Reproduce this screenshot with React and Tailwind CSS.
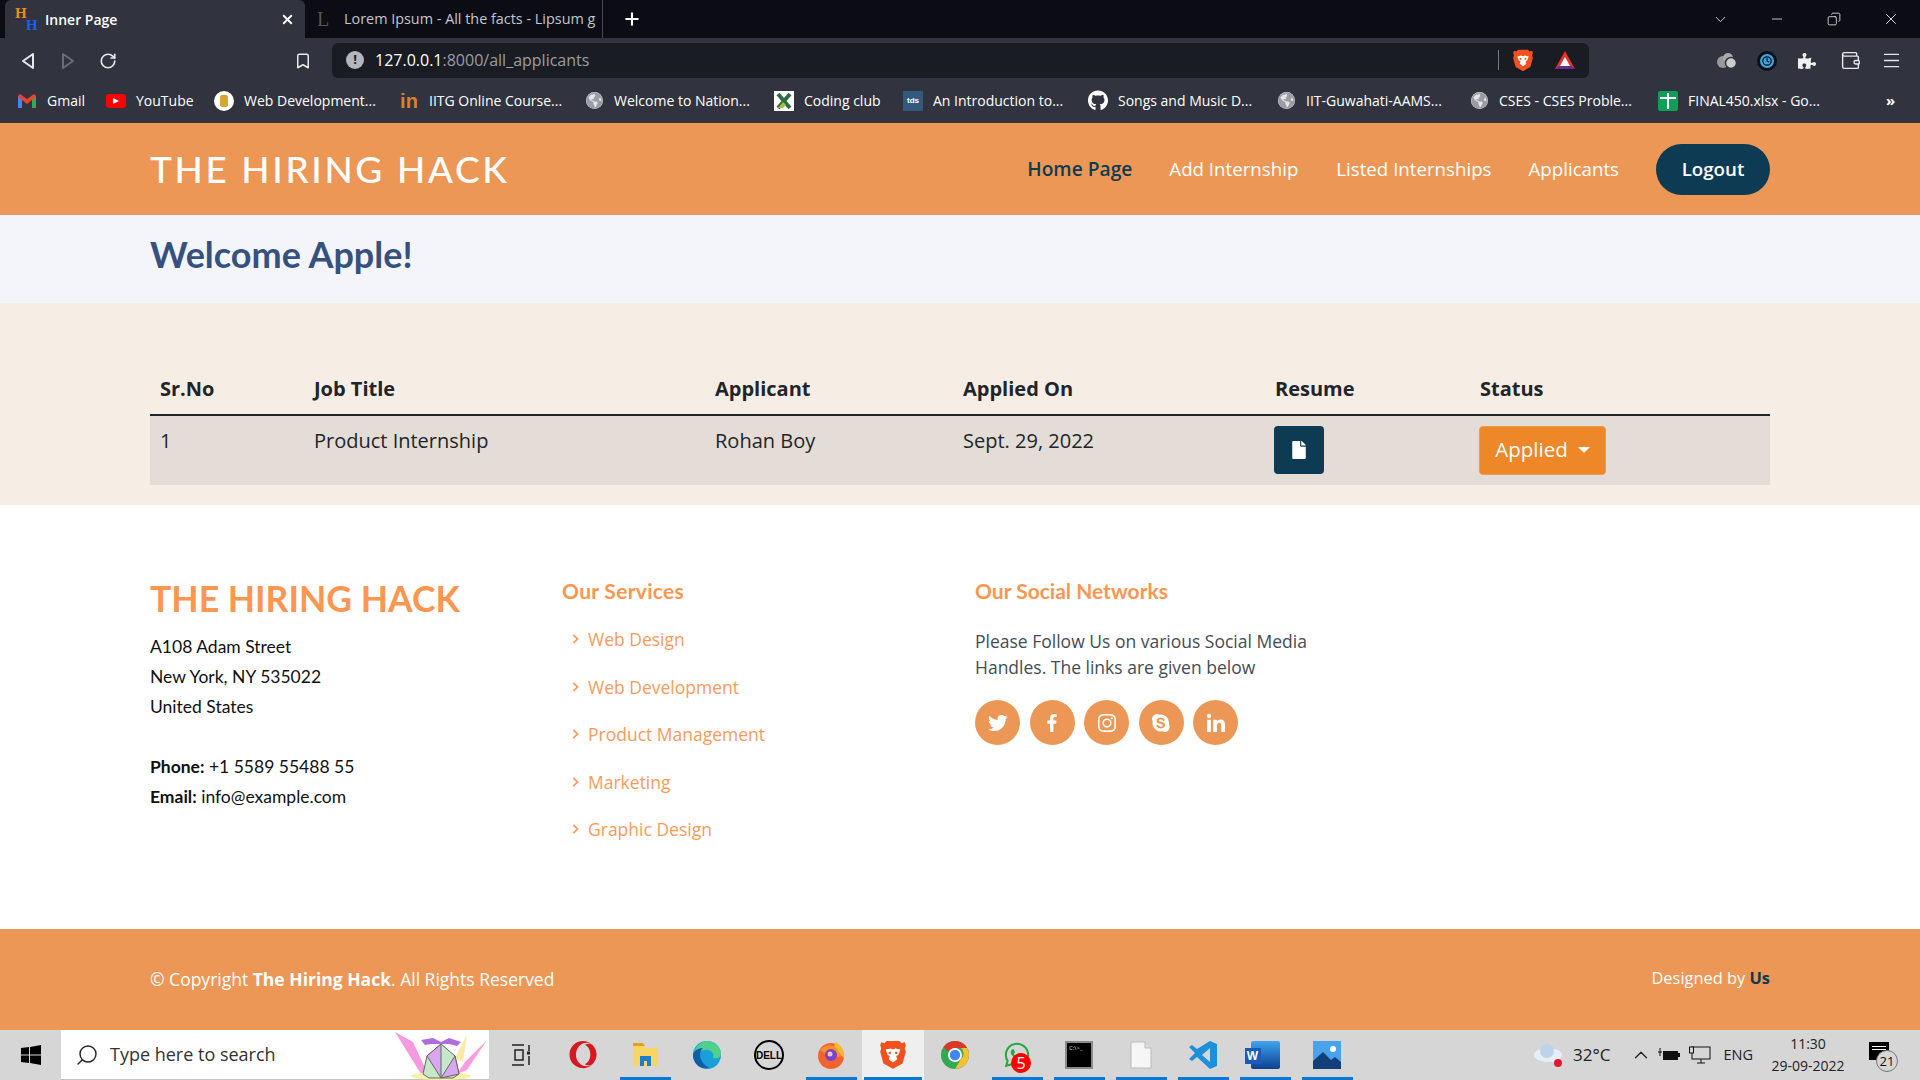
import React from 'react';
import { BiChevronRight, BiLogoTwitter, BiLogoFacebook, BiLogoInstagram, BiLogoSkype, BiLogoLinkedin } from 'react-icons/bi';
import { FaFile, FaGithub, FaPuzzlePiece, FaOpera, FaWhatsapp, FaGlobeAmericas } from 'react-icons/fa';
import { ChevronDown, Minus, Copy, X, Plus, Bookmark, RotateCw, Menu, Search, Wallet, ChevronUp, Clock } from 'lucide-react';

const heading = "font-['Lato',sans-serif]";

const Globe = () => <FaGlobeAmericas className="text-[17px] text-[#9a9da6] bg-[#e4e5e8] rounded-full" />;

const BraveLion = ({ size = 22 }) => (
  <svg width={size} height={size * 1.15} viewBox="0 0 24 28">
    <path d="M6 1h12l2 2 3-1 1 3-1 3 1 3-3 11-9 5-9-5L0 11l1-3-1-3 1-3 3 1z" fill="#f1501f" />
    <path d="M5 9l5-1 2 1 2-1 5 1-2 5-2 1 1 3-4 3-4-3 1-3-2-1z" fill="#fff" />
    <path d="M8 11h2v2H8zM14 11h2v2h-2z" fill="#f1501f" />
  </svg>
);

const bookmarks = [
  { w: 'w-[89px]', label: 'Gmail', icon: <svg width="18" height="14" viewBox="0 0 18 14"><path d="M0 2v12h4V6l5 4 5-4v8h4V2l-2-2-7 5-7-5z" fill="#ea4335" /><path d="M0 3v11h4V6z" fill="#4285f4" /><path d="M18 3v11h-4V6z" fill="#34a853" /></svg> },
  { w: 'w-[108px]', label: 'YouTube', icon: <span className="w-5 h-[14px] bg-[#f00] rounded-[3px] flex items-center justify-center"><span className="w-0 h-0 border-y-[3.5px] border-y-transparent border-l-[6px] border-l-white" /></span> },
  { w: 'w-[185px]', label: 'Web Development...', icon: <span className="w-5 h-5 bg-white rounded-full flex items-center justify-center"><span className="w-2 h-3 bg-[#d7a531] rounded-[2px]" /></span> },
  { w: 'w-[185px]', label: 'IITG Online Course...', icon: <span className="text-[#d9822b] text-[20px] font-bold leading-none font-['Liberation_Sans',sans-serif]">in</span> },
  { w: 'w-[190px]', label: 'Welcome to Nation...', icon: <Globe /> },
  { w: 'w-[129px]', label: 'Coding club', icon: <svg width="20" height="20" viewBox="0 0 20 20"><rect width="20" height="20" fill="#fff" /><path d="M4 3l12 14M16 3L4 17" stroke="#2f6b45" strokeWidth="4" /><path d="M4 17l5-6 3 3-3 3z" fill="#a6c23c" /></svg> },
  { w: 'w-[185px]', label: 'An Introduction to...', icon: <span className="w-5 h-5 bg-[#35597a] text-white text-[8px] font-bold flex items-center justify-center font-['Liberation_Sans',sans-serif]">tds</span> },
  { w: 'w-[188px]', label: 'Songs and Music D...', icon: <FaGithub className="text-[21px] text-white" /> },
  { w: 'w-[193px]', label: 'IIT-Guwahati-AAMS...', icon: <Globe /> },
  { w: 'w-[189px]', label: 'CSES - CSES Proble...', icon: <Globe /> },
  { w: 'w-[213px]', label: 'FINAL450.xlsx - Go...', icon: <span className="w-5 h-5 bg-[#0f9d58] rounded-[2px] relative flex items-center justify-center"><span className="w-[2px] h-4 bg-white" /><span className="absolute w-4 h-[2px] bg-white top-[6px] left-[2px]" /></span> },
];

const TaskIcon = ({ children, active, on }) => (
  <div className={`w-[62px] h-[50px] flex flex-col items-center relative ${on ? 'bg-[#efefef]' : ''}`}>
    <div className="flex-1 flex items-center justify-center">{children}</div>
    {active && <div className={`absolute bottom-0 h-[3px] bg-[#0a78d4] ${on ? 'w-[58px]' : 'w-[51px]'}`} />}
  </div>
);

const socials = [BiLogoTwitter, BiLogoFacebook, BiLogoInstagram, BiLogoSkype, BiLogoLinkedin];
const layanan = ['Web Design', 'Web Development', 'Product Management', 'Marketing', 'Graphic Design'];

const App = () => {
  return (
    <div className="w-[1920px] h-[1080px] overflow-hidden flex flex-col bg-white font-['Open_Sans',sans-serif]">
      {/* --- browser tabs --- */}
      <div className="h-[38px] bg-[#0b0c14] flex items-end text-white shrink-0">
        <div className="ml-[5px] w-[300px] h-[38px] bg-[#31343f] rounded-t-[6px] flex items-center pl-[10px] pr-[10px]">
          <span className="w-[22px] h-[24px] flex font-['Liberation_Serif',serif] font-bold text-[15px] leading-[12px]">
            <span className="self-start w-[11px] h-[12px] text-[#f08a1c]">H</span>
            <span className="self-end w-[11px] h-[12px] text-[#1a5cff]">H</span>
          </span>
          <span className="ml-[8px] text-[14px] font-semibold flex-1">Inner Page</span>
          <X size={15} strokeWidth={3} />
        </div>
        <div className="w-[298px] h-[38px] flex items-center pl-[12px] border-r border-[#444750] my-auto">
          <span className="text-[#555] font-['Liberation_Serif',serif] text-[20px] leading-none w-[27px]">L</span>
          <span className="text-[14.4px] text-[#c4c6cc] whitespace-nowrap overflow-hidden w-[256px]">Lorem Ipsum - All the facts - Lipsum g</span>
        </div>
        <div className="h-[38px] flex items-center ml-[19px]"><Plus size={20} strokeWidth={2.5} /></div>
        <div className="flex-1" />
        <div className="h-[38px] flex items-center text-[#ececec]">
          <ChevronDown size={17} strokeWidth={1.2} className="mr-[40px]" />
          <Minus size={16} strokeWidth={1.2} className="mr-[42px]" />
          <Copy size={14} strokeWidth={1.4} className="mr-[41px] -scale-x-100" />
          <X size={18} strokeWidth={1.2} className="mr-[20px]" />
        </div>
      </div>

      {/* --- toolbar --- */}
      <div className="h-[46px] bg-[#31343f] flex items-center text-[#e8e8ea] shrink-0 pb-[1px]">
        <svg width="14" height="18" viewBox="0 0 14 18" className="ml-[21px]"><path d="M12 2L2 9l10 7z" fill="none" stroke="#e8e8ea" strokeWidth="2" strokeLinejoin="round" /></svg>
        <svg width="14" height="18" viewBox="0 0 14 18" className="ml-[26px]"><path d="M2 2l10 7-10 7z" fill="none" stroke="#6a6d76" strokeWidth="2" strokeLinejoin="round" /></svg>
        <RotateCw size={18} strokeWidth={2.2} className="ml-[24px]" />
        <Bookmark size={18} strokeWidth={2} className="ml-[177px]" />
        <div className="ml-[20px] w-[1257px] h-[35px] mt-[-1px] bg-[#1a1c23] rounded-[6px] flex items-center pl-[14px] pr-[12px]">
          <span className="w-[18px] h-[18px] rounded-full bg-[#b4b6bb] text-[#1a1c23] text-[13px] font-bold flex items-center justify-center">!</span>
          <span className="ml-[11px] text-[16px] text-white">127.0.0.1<span className="text-[#9b9da3]">:8000/all_applicants</span></span>
          <div className="flex-1" />
          <div className="w-[1px] h-5 bg-[#777]" />
          <span className="ml-[14px]"><BraveLion size={20} /></span>
          <svg width="24" height="22" viewBox="0 0 24 22" className="ml-[20px]"><path d="M12 2l10 18H2z" fill="#e5322d" /><path d="M12 8l5 9H7z" fill="#fff" /><path d="M2 20h20l-4-3H6z" fill="#662d91" /></svg>
        </div>
        <svg width="22" height="18" viewBox="0 0 22 18" className="ml-[127px]"><circle cx="7" cy="10" r="6" fill="#999" /><circle cx="12" cy="6" r="5" fill="#aaa" /><circle cx="15" cy="11" r="5.5" fill="#ccc" stroke="#31343f" strokeWidth="1.5" /></svg>
        <span className="ml-[19px] w-5 h-5 rounded-full bg-[#3aa6e0] border-[3px] border-[#0c0f1a] flex items-center justify-center"><Clock size={10} className="text-[#0c0f1a]" strokeWidth={3} /></span>
        <FaPuzzlePiece className="ml-[21px] text-[18px] text-[#f0f0f0]" />
        <Wallet size={21} strokeWidth={1.6} className="ml-[24px]" />
        <Menu size={21} strokeWidth={1.6} className="ml-[20px]" />
      </div>

      {/* --- bookmarks --- */}
      <div className="h-[39px] bg-[#31343f] flex items-center text-white text-[14px] pl-[17px] pb-[6px] shrink-0">
        {bookmarks.map((b) => (
          <div key={b.label} className={`${b.w} flex items-center shrink-0`}>
            <span className="w-[20px] flex items-center justify-center">{b.icon}</span>
            <span className="ml-[10px] whitespace-nowrap">{b.label}</span>
          </div>
        ))}
        <span className="ml-[15px] text-[15px] font-bold">»</span>
      </div>
      <div className="h-[1px] bg-[#ec9755] shrink-0" />

      {/* --- navbar situs --- */}
      <nav className="h-[91px] bg-[#ec9755] flex items-center justify-between px-[150px] shrink-0">
        <span className={`text-white text-[37px] font-medium tracking-[2.6px] leading-none mt-[-2px] ${heading}`}>THE HIRING HACK</span>
        <div className="flex items-center text-[18.7px] text-white">
          <a className="font-semibold text-[#0d3b54] text-[19.2px]">Home Page</a>
          <a className="ml-[37px]">Add Internship</a>
          <a className="ml-[38px]">Listed Internships</a>
          <a className="ml-[37px]">Applicants</a>
          <button className="ml-[37px] w-[114px] h-[51px] rounded-full bg-[#0d3b54] text-white font-semibold">Logout</button>
        </div>
      </nav>

      {/* --- judul --- */}
      <div className="h-[88px] bg-[#f3f5fa] flex items-center px-[150px] shrink-0">
        <h1 className={`text-[36px] font-bold text-[#37517e] ${heading} mt-[-10px]`}>Welcome Apple!</h1>
      </div>

      {/* --- tabel pelamar --- */}
      <section className="h-[202px] bg-[#f6ede5] px-[150px] pt-[50px] text-[#212529] shrink-0">
        <table className="w-full table-fixed text-left text-[20px]">
          <colgroup>
            <col className="w-[154px]" />
            <col className="w-[401px]" />
            <col className="w-[248px]" />
            <col className="w-[312px]" />
            <col className="w-[205px]" />
            <col />
          </colgroup>
          <thead>
            <tr className="h-[62px] border-b-2 border-[#212529]">
              {['Sr.No', 'Job Title', 'Applicant', 'Applied On', 'Resume', 'Status'].map((h) => (
                <th key={h} className="px-[10px] pt-[11px] font-bold text-[20px]">{h}</th>
              ))}
            </tr>
          </thead>
          <tbody>
            <tr className="h-[70px] bg-[#e4dcd6] align-top">
              <td className="px-[10px] pt-[10px]">1</td>
              <td className="px-[10px] pt-[10px]">Product Internship</td>
              <td className="px-[10px] pt-[10px]">Rohan Boy</td>
              <td className="px-[10px] pt-[10px]">Sept. 29, 2022</td>
              <td className="px-[10px] pt-[10px]">
                <button className="-ml-[1px] w-[50px] h-[48px] bg-[#0d3b54] rounded-[4px] flex items-center justify-center text-white"><FaFile className="text-[18px]" /></button>
              </td>
              <td className="px-[10px] pt-[10px]">
                <button className="-ml-[1px] w-[127px] h-[49px] bg-[#ed8728] rounded-[4px] flex items-center justify-center text-white border border-[#f09a4a] text-[20.5px] pb-[2px]">
                  Applied
                  <span className="ml-[10px] w-0 h-0 border-x-[6px] border-x-transparent border-t-[6px] border-t-white" />
                </button>
              </td>
            </tr>
          </tbody>
        </table>
      </section>

      {/* --- footer --- */}
      <footer className="h-[424px] bg-white px-[150px] grid grid-cols-[412px_413px_1fr] shrink-0 text-[#444]">
        <div className={`pt-[72px] ${heading} text-[#111] text-[17.5px] leading-[30px]`}>
          <h3 className="text-[35.5px] font-bold text-[#fd9650] leading-[43px] mb-[12px]">THE HIRING HACK</h3>
          <p>A108 Adam Street</p>
          <p>New York, NY 535022</p>
          <p>United States</p>
          <p className="mt-[30px]"><strong>Phone:</strong> +1 5589 55488 55</p>
          <p><strong>Email:</strong> info@example.com</p>
        </div>
        <div className="pt-[69px]">
          <h4 className={`text-[21px] tracking-[0.3px] font-bold text-[#fd9650] leading-[34px] ${heading}`}>Our Services</h4>
          <ul className="mt-[8px] text-[17.5px] text-[#fb9a5c]">
            {layanan.map((item) => (
              <li key={item} className="h-[47.5px] flex items-center pl-[3px] pb-[1px]">
                <BiChevronRight className="text-[20px] mr-[3px]" />
                {item}
              </li>
            ))}
          </ul>
        </div>
        <div className="pt-[69px]">
          <h4 className={`text-[21px] font-bold text-[#fd9650] leading-[34px] ${heading}`}>Our Social Networks</h4>
          <p className="mt-[20px] text-[17.5px] leading-[26px] text-[#444c55] w-[360px]">Please Follow Us on various Social Media Handles. The links are given below</p>
          <div className="mt-[20px] flex gap-[9.5px]">
            {socials.map((Icon, i) => (
              <a key={i} className="w-[45px] h-[45px] rounded-full bg-[#ec9755] flex items-center justify-center text-white text-[24px]"><Icon /></a>
            ))}
          </div>
        </div>
      </footer>

      {/* --- copyright --- */}
      <div className="h-[101px] bg-[#ec9755] flex items-center justify-between px-[150px] text-white shrink-0">
        <span className="text-[17.5px]">© Copyright <strong>The Hiring Hack</strong>. All Rights Reserved</span>
        <span className="text-[16.4px] mb-[3px]">Designed by <strong className="text-[#0d3b54]">Us</strong></span>
      </div>

      {/* --- taskbar windows --- */}
      <div className="h-[50px] bg-[#d6d6d6] flex items-center shrink-0">
        <div className="w-[61px] flex items-center justify-center">
          <svg width="20" height="20" viewBox="0 0 20 20" fill="#000"><path d="M0 3l8-1v7.5H0zM9 2l11-2v9.5H9zM0 10.5h8V18l-8-1zM9 10.5h11V20L9 18z" /></svg>
        </div>
        <div className="w-[428px] h-[50px] bg-white border-b border-[#c4c4c4] flex items-center pl-[14px] relative mr-[1px]">
          <Search size={24} strokeWidth={1.4} className="-scale-x-100 text-[#222]" />
          <span className="ml-[11px] text-[18px] text-[#333]">Type here to search</span>
          <svg width="94" height="50" viewBox="0 0 94 50" className="absolute right-0 top-0">
            <path d="M0 2l18 10 14 30-6 2z" fill="#f59ae0" />
            <path d="M92 10L70 32l-8 12 10-4z" fill="#fb9ce0" />
            <path d="M72 4L60 28l8 4z" fill="#fbe9a8" />
            <ellipse cx="46" cy="46" rx="30" ry="4" fill="#fbf0a8" />
            <path d="M46 14l14 12 4 18-6 4H34l-6-4 4-18z" fill="#c6e7c9" stroke="#666" />
            <path d="M46 14L32 26l14 22zM60 26l-14 22 18-4z" fill="#d9a7f0" stroke="#666" />
            <path d="M26 10l12-2 8 4 8-4 12 4-4 4-8-2H36l-6 1z" fill="#b06de0" />
          </svg>
        </div>
        <TaskIcon>
          <svg width="20" height="24" viewBox="0 0 20 24" fill="none" stroke="#222" strokeWidth="1.5"><path d="M1 2h12M1 22h12M4 7h8v10H4zM18 2v6M18 13v9" /><path d="M16 10h3" strokeWidth="3" /></svg>
        </TaskIcon>
        <TaskIcon><FaOpera className="text-[28px] text-[#d6181f]" /></TaskIcon>
        <TaskIcon active>
          <svg width="27" height="26" viewBox="0 0 27 26"><path d="M1 3h10l2 3h13v18H1z" fill="#f9d563" /><path d="M1 1h10l2 3H1z" fill="#d9a521" /><path d="M8 14h11v10h-4v-5h-3v5H8z" fill="#1a7fd1" /></svg>
        </TaskIcon>
        <TaskIcon>
          <svg width="30" height="30" viewBox="0 0 30 30"><circle cx="15" cy="15" r="14" fill="#1aa0d8" /><path d="M1 15C3 6 10 1 15 1c8 0 14 6 14 13 0 4-5 5-8 4 2-5-3-9-8-8-6 1-9 3-12 5z" fill="#4fd08c" /><path d="M1 15c0-4 5-7 10-7-5 4-4 14 6 20-9 2-16-5-16-13z" fill="#0f5fa8" /></svg>
        </TaskIcon>
        <TaskIcon>
          <span className="w-[30px] h-[30px] rounded-full border-2 border-black flex items-center justify-center text-[10px] font-bold text-black font-['Liberation_Sans',sans-serif]">DELL</span>
        </TaskIcon>
        <TaskIcon active>
          <svg width="30" height="30" viewBox="0 0 30 30"><circle cx="15" cy="16" r="13" fill="#f2642e" /><path d="M20 2c6 4 9 10 8 16L17 8z" fill="#fbb92f" /><path d="M4 10c5-6 12-6 16-2l6 8-10 2z" fill="#f89028" /><circle cx="15" cy="15" r="6" fill="#7c3fd1" /><circle cx="14" cy="14" r="2.5" fill="#f6c0a8" /></svg>
        </TaskIcon>
        <TaskIcon active on><BraveLion size={26} /></TaskIcon>
        <TaskIcon>
          <svg width="30" height="30" viewBox="0 0 30 30"><circle cx="15" cy="15" r="14" fill="#34a853" /><path d="M15 1a14 14 0 0 1 12.1 7H15a7 7 0 0 0-6.4 4L3.5 7A14 14 0 0 1 15 1z" fill="#e0352b" /><path d="M27.1 8A14 14 0 0 1 15 29l6-10a7 7 0 0 0 0-11z" fill="#fbc02d" /><circle cx="15" cy="15" r="7" fill="#fff" /><circle cx="15" cy="15" r="5.2" fill="#4285f4" /></svg>
        </TaskIcon>
        <TaskIcon active>
          <span className="relative">
            <FaWhatsapp className="text-[28px] text-[#25a83e]" />
            <span className="absolute left-[8px] top-[12px] w-5 h-5 rounded-full bg-[#f00] text-white text-[16px] leading-none flex items-center justify-center">5</span>
          </span>
        </TaskIcon>
        <TaskIcon active>
          <span className="w-[28px] h-[28px] bg-black border-[2px] border-[#8a8a8a] text-[#ddd] text-[6px] leading-none pl-[2px] pt-[2px]">C:\&gt;_</span>
        </TaskIcon>
        <TaskIcon active>
          <svg width="22" height="28" viewBox="0 0 22 28"><path d="M1 1h14l6 6v20H1z" fill="#f6f6f6" stroke="#bbb" /><path d="M15 1v6h6" fill="#ddd" stroke="#bbb" /></svg>
        </TaskIcon>
        <TaskIcon active>
          <svg width="30" height="30" viewBox="0 0 30 30"><path d="M22 1l7 3v22l-7 3-13-12-5 4-3-2 6-6-6-6 3-2 5 4z" fill="#1d8fdb" /><path d="M22 8l-8 7 8 7z" fill="#d6d6d6" /></svg>
        </TaskIcon>
        <TaskIcon active>
          <span className="relative w-[29px] h-[28px] bg-gradient-to-b from-[#41a5ee] to-[#103f91] rounded-[2px]">
            <span className="absolute left-[-6px] top-[7px] w-[16px] h-[16px] bg-[#185abd] text-white text-[12px] font-bold flex items-center justify-center font-['Liberation_Sans',sans-serif]">W</span>
          </span>
        </TaskIcon>
        <TaskIcon active>
          <svg width="28" height="28" viewBox="0 0 28 28"><rect width="28" height="28" fill="#4aa3ea" /><circle cx="20" cy="8" r="3" fill="#fff" /><path d="M0 28V20l10-9 8 8 4-3 6 5v7z" fill="#123f78" /></svg>
        </TaskIcon>

        <div className="flex-1" />
        <svg width="30" height="24" viewBox="0 0 30 24" className="mr-[10px]"><ellipse cx="15" cy="12" rx="14" ry="7" fill="#e6eef6" /><circle cx="14" cy="8" r="7" fill="#bcd3e8" /><circle cx="25" cy="20" r="4" fill="#e3172f" /></svg>
        <span className="text-[17px] text-[#222] mr-[3px]">32°C</span>
        <ChevronUp size={22} strokeWidth={1.4} className="ml-[17px] text-[#222]" />
        <svg width="22" height="14" viewBox="0 0 22 14" className="ml-[6px]"><rect x="5" y="3" width="15" height="9" fill="#111" /><rect x="20" y="5" width="2" height="4" fill="#111" /><path d="M0 4h4M2 0v8" stroke="#111" /></svg>
        <svg width="22" height="18" viewBox="0 0 22 18" fill="none" stroke="#111" className="ml-[9px]"><rect x="3" y="1" width="18" height="12" /><path d="M8 17h8M12 13v4" /><rect x="0.5" y="1" width="4" height="6" fill="#d6d6d6" /></svg>
        <span className="ml-[12px] text-[14.5px] text-[#222]">ENG</span>
        <div className="ml-[8px] w-[94px] flex flex-col items-center text-[14px] text-[#222] leading-[22px]">
          <span>11:30</span>
          <span>29-09-2022</span>
        </div>
        <span className="ml-[14px] mr-[31px] relative w-[20px] h-[18px] bg-black mb-[8px] flex flex-col gap-[2px] pt-[4px] px-[3px]">
          <span className="h-[1px] bg-white" />
          <span className="h-[1px] bg-white" />
          <span className="absolute left-[7px] top-[8px] w-[22px] h-[22px] rounded-full bg-[#d6d6d6] border border-[#777] text-[13px] text-[#111] flex items-center justify-center leading-none">21</span>
        </span>
      </div>
    </div>
  );
};

export default App;
